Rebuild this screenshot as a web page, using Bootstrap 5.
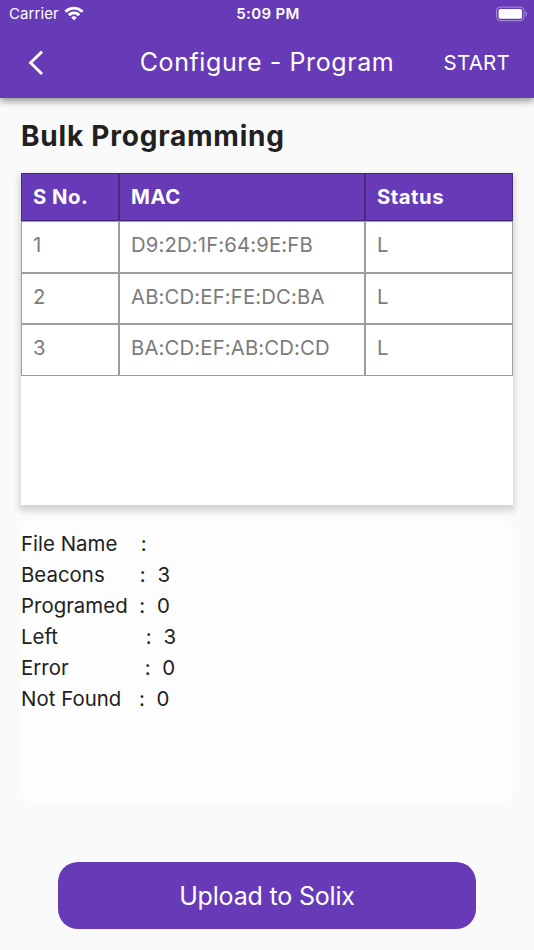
<!DOCTYPE html>
<html lang="en">
<head>
<meta charset="utf-8">
<meta name="viewport" content="width=device-width, initial-scale=1">
<title>Configure - Program</title>
<link href="https://cdn.jsdelivr.net/npm/bootstrap@5.3.0/dist/css/bootstrap.min.css" rel="stylesheet">
<style>
body{font-family:Inter,"Liberation Sans",sans-serif;background:#fafafa;color:#212121;height:950px;overflow:hidden}
.app-top{background:#673ab7;height:98px;box-shadow:0 3px 7px rgba(0,0,0,.42);color:#fff}
.status-line{height:27px;padding:0 7px 0 9px}
.status-line>div{flex:1 1 0}
.carrier{font-size:15px;letter-spacing:.1px;line-height:27px}
.clock{font-size:15px;font-weight:600;letter-spacing:.35px;line-height:27px}
.title-line{height:71px;padding:0 24px 0 28px}
.title-line>div{flex:1 1 0}
.app-title{font-size:25px;letter-spacing:.6px;line-height:30px;margin-right:4px;padding-bottom:1px}
.start-btn{font-size:20.5px;letter-spacing:.25px;line-height:30px}
.page{padding:20px 21px 0}
.page-title{font-size:28px;font-weight:700;letter-spacing:.78px;line-height:36px;margin:0 0 19px}
.list-panel{background:#fff;height:332px;margin-bottom:13px;box-shadow:0 4px 6px 2px rgba(0,0,0,.15)}
.grid-row{display:grid;grid-template-columns:98px 246px 148px;font-size:20.3px;color:#7b7b7b}
.grid-row>div{height:51.6px;border:1px solid #9e9e9e;padding:0 11px;line-height:46px;letter-spacing:.15px;white-space:nowrap}
.grid-row.grid-head{color:#fff;font-weight:700}
.grid-row.grid-head>div{height:48px;background:#673ab7;border:1px solid #482880;line-height:46px;letter-spacing:.5px}
.summary{background:#fdfdfd;border-radius:14px;height:285px;padding-top:10px;font-size:20.4px;line-height:31px;letter-spacing:.02px;word-spacing:.1px;white-space:pre}
.upload{height:67px;width:418px;margin:59px auto 0;background:#673ab7;border-radius:20px;color:#fff;font-size:25px;letter-spacing:-.18px;line-height:1;padding-top:7px}
.upload:hover{background:#5e35b1;color:#fff}
</style>
</head>
<body>
<header class="app-top position-relative">
  <div class="status-line d-flex align-items-center">
    <div class="d-flex align-items-center">
      <span class="carrier">Carrier</span>
      <svg class="ms-1" width="22" height="16" viewBox="0 0 22 16" fill="#fff"><path d="M11 .7c3.600 0 6.700 1.400 9.300 3.700q.3.300 0 .6l-1.400 1.400q-.3.300-.6 0A10.500 10.500 0 0 0 3.700 6.400q-.3.300-.6 0L1.700 5q-.3-.3 0-.6A13.500 13.500 0 0 1 11 .7z"/><path d="M11 5.500c2.200 0 4.300.8 5.900 2.300q.3.300 0 .6l-1.500 1.500q-.3.300-.6 0a5.700 5.700 0 0 0-7.600 0q-.3.300-.6 0L5.100 8.400q-.3-.3 0-.6A8.700 8.700 0 0 1 11 5.500z"/><path d="M11 10.200c1 0 1.900.4 2.600 1q.3.300 0 .6L11.300 14.100q-.3.300-.6 0L8.400 11.800q-.3-.3 0-.6c.7-.6 1.600-1 2.600-1z"/></svg>
    </div>
    <span class="clock">5:09 PM</span>
    <div class="d-flex justify-content-end">
      <svg width="32" height="16" viewBox="0 0 32 16"><rect x="1.600" y="1.100" width="27.400" height="13.600" rx="4" fill="none" stroke="#fff" stroke-opacity=".45"/><rect x="3.600" y="3.100" width="23.400" height="9.600" rx="1.600" fill="#fff"/><path d="M30.600 5.600c1.600.7 1.600 3.900 0 4.600z" fill="#fff" fill-opacity=".5"/></svg>
    </div>
  </div>
  <div class="title-line d-flex align-items-center">
    <div class="d-flex"><svg width="17" height="26" viewBox="0 0 17 26" fill="none" stroke="#fff" stroke-width="2.900"><path d="M14 1.600 2.600 12.800 14 24"/></svg></div>
    <span class="app-title text-nowrap">Configure - Program</span>
    <div class="text-end"><span class="start-btn">START</span></div>
  </div>
</header>
<main class="page">
  <h1 class="page-title">Bulk Programming</h1>
  <section class="list-panel">
    <div class="grid-row grid-head"><div>S No.</div><div>MAC</div><div>Status</div></div>
    <div class="grid-row"><div>1</div><div>D9:2D:1F:64:9E:FB</div><div>L</div></div>
    <div class="grid-row"><div>2</div><div>AB:CD:EF:FE:DC:BA</div><div>L</div></div>
    <div class="grid-row"><div>3</div><div>BA:CD:EF:AB:CD:CD</div><div>L</div></div>
  </section>
  <section class="summary"><div>File Name    :</div><div>Beacons      :  3</div><div>Programed  :  0</div><div>Left               :  3</div><div>Error             :  0</div><div>Not Found   :  0</div></section>
  <button type="button" class="upload btn border-0 d-flex align-items-center justify-content-center">Upload to Solix</button>
</main>
<script src="https://cdn.jsdelivr.net/npm/bootstrap@5.3.0/dist/js/bootstrap.bundle.min.js"></script>
</body>
</html>
